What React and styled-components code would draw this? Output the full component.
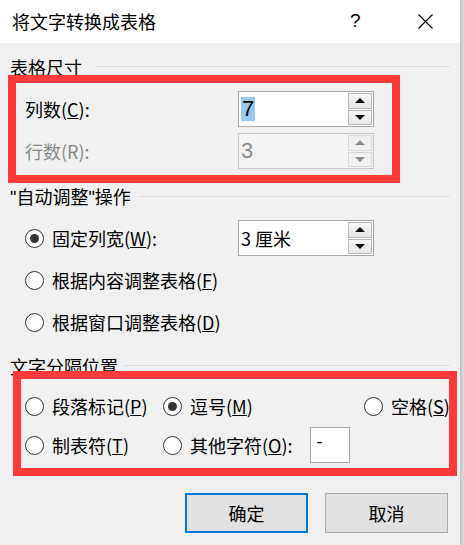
import styled, { createGlobalStyle } from 'styled-components';

const GlobalStyle = createGlobalStyle`
  html, body {
    margin: 0;
    padding: 0;
    background: #f0f0f0;
  }
  body {
    font-family: "Noto Sans CJK SC", "Microsoft YaHei", sans-serif;
    color: #000;
  }
  * { box-sizing: border-box; }
`;

const Window = styled.div`
  display: flex;
  width: 464px;
  height: 545px;
  overflow: hidden;
`;

const Dialog = styled.div`
  width: 460px;
  display: flex;
  flex-direction: column;
  background: #f0f0f0;
`;

const Edge = styled.div`
  width: 4px;
  background: linear-gradient(to right, #bdbdbd, #cfcfcf 40%, #dadada);
`;

const TitleBar = styled.div`
  height: 43px;
  background: #fff;
  display: flex;
  align-items: center;
  padding-left: 12px;
  font-size: 18px;
  line-height: 20px;
`;

const Title = styled.div`
  flex: 1;
  margin-top: -2px;
`;

const Help = styled.div`
  width: 14px;
  margin-right: 54px;
  font-family: "Liberation Sans", sans-serif;
  font-size: 19px;
  margin-top: -2px;
`;

const Close = styled.div`
  width: 15px;
  height: 15px;
  margin-right: 27px;
  margin-top: -1px;
  display: flex;
`;

const Body = styled.div`
  flex: 1;
  padding-top: 16px;
  font-size: 18px;
`;

const Header = styled.div`
  display: flex;
  align-items: center;
  height: 16px;
  line-height: 16px;
  padding: 0 10px;
  margin-top: ${p => p.$top || 0}px;
  gap: ${p => p.$gap || 10}px;
  white-space: nowrap;
`;

const Quote = styled.span`
  font-family: "Liberation Sans", sans-serif;
`;

const Rule = styled.div`
  flex: 1;
  height: 1px;
  background: #dcdcdc;
  margin-top: -2px;
`;

const Highlight = styled.div`
  border: 8px solid #fd3a3a;
  margin-left: ${p => p.$left}px;
  width: ${p => p.$width}px;
  margin-top: ${p => p.$top || 0}px;
  position: relative;
  padding: ${p => p.$pad};
`;

const SizeGrid = styled.div`
  display: grid;
  grid-template-columns: 213px 136px;
  row-gap: 6px;
  align-items: center;
`;

const Label = styled.div`
  line-height: 20px;
  color: ${p => (p.$disabled ? '#8a8a8a' : '#000')};
  white-space: nowrap;
`;

const Spin = styled.div`
  display: flex;
  width: 136px;
  height: 36px;
  border: 1px solid ${p => (p.$disabled ? '#c6c6c6' : '#a9a9a9')};
  background: ${p => (p.$disabled ? '#f3f3f3' : '#fff')};
  padding: 1px 1px 1px 0;
`;

const SpinText = styled.div`
  flex: 1;
  display: flex;
  align-items: center;
  padding-left: 2px;
  font-size: ${p => p.$size || 18}px;
  line-height: 24px;
  color: ${p => (p.$disabled ? '#8d8d8d' : '#000')};
  font-family: ${p => (p.$latin ? '"Liberation Sans", sans-serif' : 'inherit')};
`;

const Selected = styled.span`
  background: #99c9ef;
  padding: 0 1px;
`;

const SpinButtons = styled.div`
  width: 24px;
  display: flex;
  flex-direction: column;
  gap: 1px;
`;

const SpinButton = styled.div`
  flex: 1;
  display: flex;
  align-items: center;
  justify-content: center;
  border: 1px solid ${p => (p.$disabled ? '#d9d9d9' : '#b9b9b9')};
  background: ${p => (p.$disabled ? '#f0f0f0' : 'linear-gradient(#f6f6f6, #e8e8e8)')};
`;

const Arrow = styled.div`
  width: 0;
  height: 0;
  border-left: 5px solid transparent;
  border-right: 5px solid transparent;
  ${p => (p.$down ? 'border-top' : 'border-bottom')}: 5px solid ${p => (p.$disabled ? '#8c8c8c' : '#111')};
`;

const Options = styled.div`
  display: flex;
  flex-direction: column;
  gap: 6px;
  margin-top: 15px;
  padding-left: 25px;
`;

const OptionRow = styled.div`
  display: flex;
  align-items: center;
  height: 36px;
`;

const Choice = styled.div`
  display: flex;
  align-items: center;
  gap: 8px;
  width: ${p => (p.$width ? `${p.$width}px` : 'auto')};
  white-space: nowrap;
  line-height: 20px;
`;

const Circle = styled.div`
  width: 19px;
  height: 19px;
  flex: none;
  border-radius: 50%;
  border: 1px solid #333;
  background: #fff;
  display: flex;
  align-items: center;
  justify-content: center;
  &::after {
    content: '';
    width: 9px;
    height: 9px;
    border-radius: 50%;
    background: ${p => (p.$on ? '#333' : 'transparent')};
  }
`;

const SepGrid = styled.div`
  display: grid;
  grid-template-columns: 138px 201px auto;
  grid-template-rows: 36px 36px;
  row-gap: 3px;
  align-items: center;
`;

const CharBox = styled.div`
  width: 40px;
  height: 36px;
  margin-left: 9px;
  border: 1px solid #a9a9a9;
  background: #fff;
  padding: 4px 0 0 6px;
  line-height: 20px;
  font-family: "Liberation Sans", sans-serif;
`;

const Footer = styled.div`
  display: flex;
  justify-content: flex-end;
  gap: 17px;
  padding-right: 12px;
  margin-top: 17px;
`;

const Button = styled.button`
  width: 123px;
  height: 40px;
  background: #e1e1e1;
  border: ${p => (p.$primary ? '2px solid #0078d7' : '1px solid #adadad')};
  font-family: inherit;
  font-size: 18px;
  color: #000;
  padding: 0;
  line-height: 20px;
`;

function SpinBox({ value, disabled, size, latin, selected }) {
  return (
    <Spin $disabled={disabled}>
      <SpinText $disabled={disabled} $size={size} $latin={latin}>
        {selected ? <Selected>{value}</Selected> : value}
      </SpinText>
      <SpinButtons>
        <SpinButton $disabled={disabled}><Arrow $disabled={disabled} /></SpinButton>
        <SpinButton $disabled={disabled}><Arrow $down $disabled={disabled} /></SpinButton>
      </SpinButtons>
    </Spin>
  );
}

function Radio({ on, children, width }) {
  return (
    <Choice $width={width}>
      <Circle $on={on} />
      <span>{children}</span>
    </Choice>
  );
}

export default function App() {
  return (
    <>
      <GlobalStyle />
      <Window>
        <Dialog>
          <TitleBar>
            <Title>将文字转换成表格</Title>
            <Help>?</Help>
            <Close>
              <svg width="15" height="15" viewBox="0 0 15 15">
                <path d="M0.5 0.5 L14.5 14.5 M14.5 0.5 L0.5 14.5" stroke="#000" strokeWidth="1.1" fill="none" />
              </svg>
            </Close>
          </TitleBar>
          <Body>
            <Header $gap={13}>表格尺寸<Rule /></Header>
            <Highlight $left={8} $width={392} $pad="8px 0 6px 9px">
              <SizeGrid>
                <Label>列数(<u>C</u>):</Label>
                <SpinBox value="7" size={22} latin selected />
                <Label $disabled>行数(R):</Label>
                <SpinBox value="3" size={22} latin disabled />
              </SizeGrid>
            </Highlight>

            <Header $top={6} $gap={8}>
              <span><Quote>"</Quote>自动调整<Quote>"</Quote>操作</span>
              <Rule />
            </Header>
            <Options>
              <OptionRow>
                <Radio on width={213}>固定列宽(<u>W</u>):</Radio>
                <SpinBox value="3 厘米" />
              </OptionRow>
              <OptionRow>
                <Radio>根据内容调整表格(<u>F</u>)</Radio>
              </OptionRow>
              <OptionRow>
                <Radio>根据窗口调整表格(<u>D</u>)</Radio>
              </OptionRow>
            </Options>

            <Header $top={18} $gap={6}>文字分隔位置<Rule /></Header>
            <Highlight $left={13} $width={444} $top={-3} $pad="9px 0 5px 4px">
              <SepGrid>
                <Radio>段落标记(<u>P</u>)</Radio>
                <Radio on>逗号(<u>M</u>)</Radio>
                <Radio>空格(<u>S</u>)</Radio>
                <Radio>制表符(<u>T</u>)</Radio>
                <Choice>
                  <Radio>其他字符(<u>O</u>):</Radio>
                  <CharBox>-</CharBox>
                </Choice>
              </SepGrid>
            </Highlight>

            <Footer>
              <Button $primary>确定</Button>
              <Button>取消</Button>
            </Footer>
          </Body>
        </Dialog>
        <Edge />
      </Window>
    </>
  );
}
